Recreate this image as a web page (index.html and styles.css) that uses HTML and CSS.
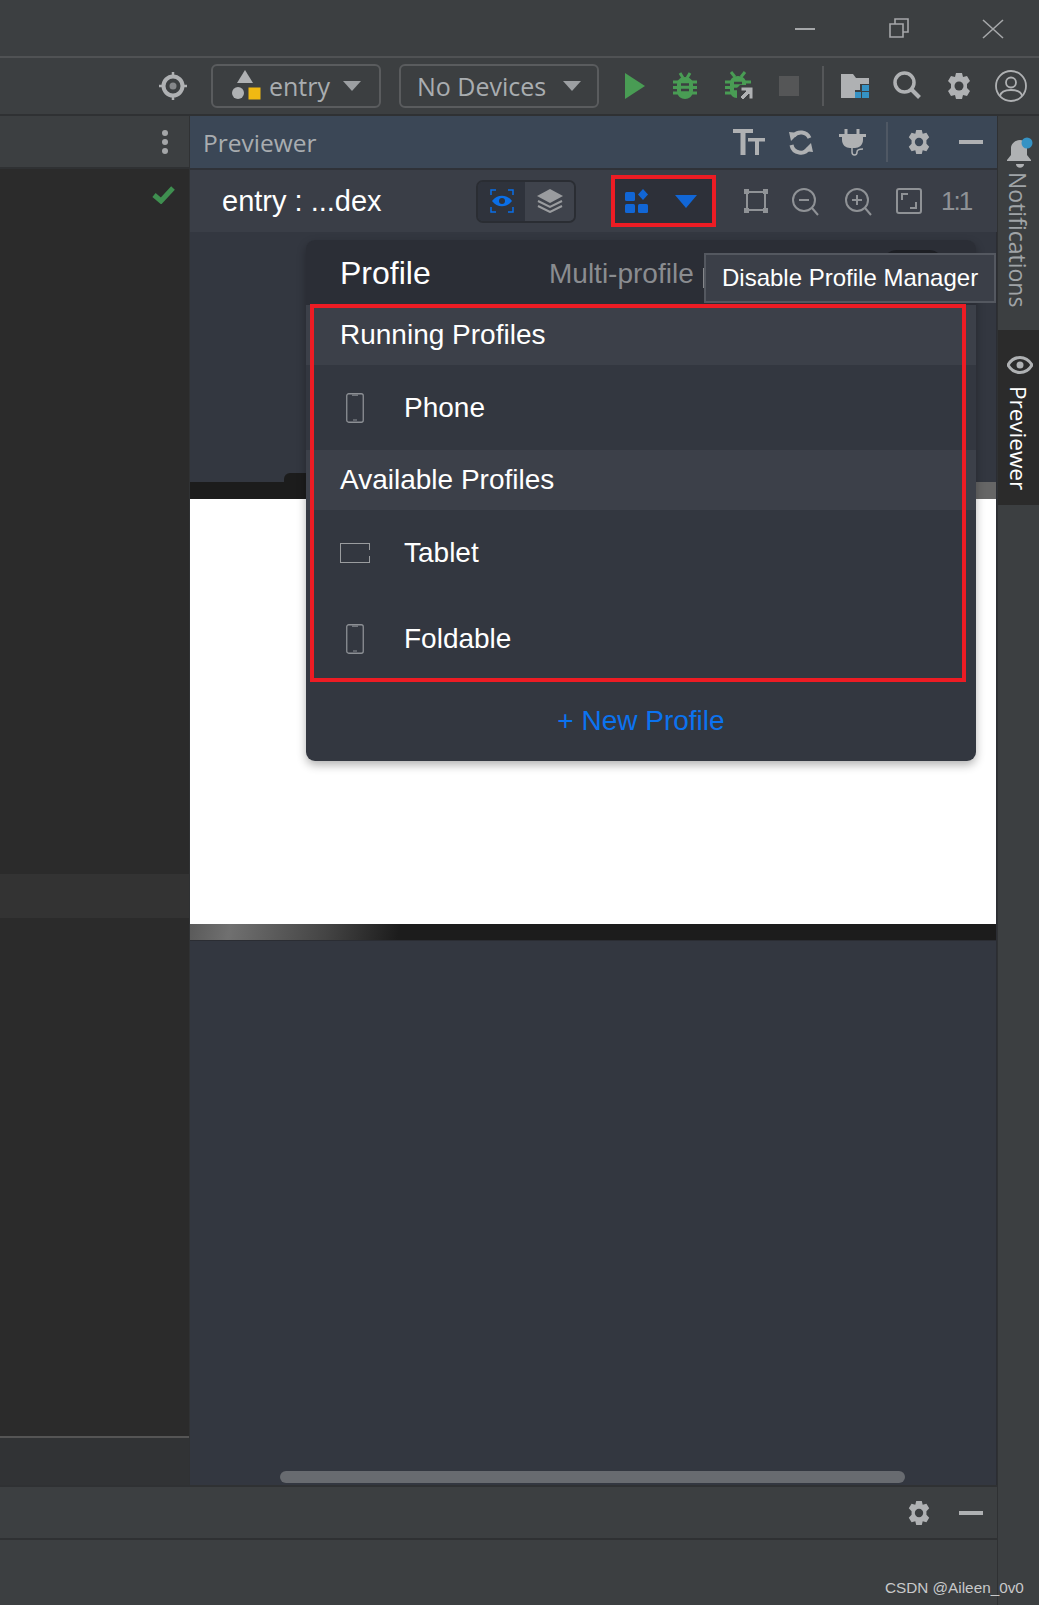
FILE: index.html
```html
<!DOCTYPE html>
<html lang="en">
<head>
<meta charset="utf-8">
<title>Previewer</title>
<link rel="stylesheet" href="styles.css">
</head>
<body>
<svg class="defs" width="0" height="0">
  <symbol id="gear" viewBox="0 0 28 28">
    <path fill="#afb1b3" d="M11 1h6l1 4 4-1 3 5-3 3v4l3 3-3 5-4-1-1 4h-6l-1-4-4 1-3-5 3-3v-4L3 9l3-5 4 1z"/>
    <circle cx="14" cy="14" r="4.5" fill="#3c3f41"/>
  </symbol>
  <symbol id="gear-h" viewBox="0 0 28 28">
    <path fill="#afb1b3" d="M11 1h6l1 4 4-1 3 5-3 3v4l3 3-3 5-4-1-1 4h-6l-1-4-4 1-3-5 3-3v-4L3 9l3-5 4 1z"/>
    <circle cx="14" cy="14" r="4.5" fill="#3b4756"/>
  </symbol>
  <symbol id="phone" viewBox="0 0 18 30">
    <rect x="0.75" y="0.75" width="16.5" height="28.5" rx="2" fill="none" stroke="#8d9095" stroke-width="1.3"/>
    <path d="M6 2.2h6M7 27h4" stroke="#8d9095" stroke-width="1"/>
  </symbol>
</svg>

<div class="app">
  <header class="titlebar">
    <svg class="win win-min" width="20" height="4" viewBox="0 0 20 4"><path d="M0 2h20" stroke="#a5a7a9" stroke-width="2"/></svg>
    <svg class="win win-max" width="20" height="20" viewBox="0 0 20 20"><path d="M1 6h13v13H1zM6 6V1h13v13h-5" fill="none" stroke="#a5a7a9" stroke-width="1.6"/></svg>
    <svg class="win win-close" width="22" height="20" viewBox="0 0 22 20"><path d="M1 1l20 18M21 1L1 19" stroke="#a5a7a9" stroke-width="1.6"/></svg>
  </header>

  <nav class="toolbar">
    <svg class="t-target" width="28" height="28" viewBox="0 0 28 28"><path d="M14 0v4M14 24v4M0 14h4M24 14h4" stroke="#afb1b3" stroke-width="2.5"/><circle cx="14" cy="14" r="9.500" fill="none" stroke="#afb1b3" stroke-width="4"/><circle cx="14" cy="14" r="3.500" fill="#85878a"/></svg>
    <div class="combo combo-entry">
      <svg class="entry-ico" width="30" height="32" viewBox="0 0 30 32"><path d="M14 1l8 13H6z" fill="#afb1b3"/><circle cx="7" cy="24" r="6" fill="#afb1b3"/><rect x="17.5" y="18.5" width="12" height="12" fill="#f0b912"/></svg>
      <span class="combo-label">entry</span>
      <i class="caret"></i>
    </div>
    <div class="combo combo-dev">
      <span class="combo-label">No Devices</span>
      <i class="caret"></i>
    </div>
    <svg class="t-play" width="20" height="26" viewBox="0 0 20 26"><path d="M0 0l20 13L0 26z" fill="#499c54"/></svg>
    <svg class="t-bug" width="24" height="28" viewBox="0 0 24 28"><g stroke="#499c54" stroke-width="3" fill="none"><path d="M7 1l3 5M17 1l-3 5M0 10h24M0 15.500h24M0 21h24"/></g><path d="M12 5c5 0 8 3 8 8v6c0 5-4 8-8 8s-8-3-8-8v-6c0-5 3-8 8-8z" fill="#499c54"/><path d="M8 12.500h8M8 18h8" stroke="#3c3f41" stroke-width="2.500"/></svg>
    <svg class="t-attach" width="30" height="30" viewBox="0 0 30 30"><g stroke="#499c54" stroke-width="3" fill="none"><path d="M6 1l4 5M20 1l-4 5M0 11h6M0 16.500h6M0 22h6M19 11h7"/></g><path d="M13 5c5 0 8 3 8 7v2h-6l-3 3v10c-4 0-7-3-7-8v-7c0-4 3-7 8-7z" fill="#499c54"/><path d="M9 12h8M9 18h4" stroke="#3c3f41" stroke-width="2.500"/><path d="M16 16h12v12h-4v-5l-6 6-3-3 6-6h-5z" fill="#afb1b3" stroke="#3c3f41"/></svg>
    <i class="t-stop"></i>
    <i class="t-div"></i>
    <svg class="t-folder" width="28" height="24" viewBox="0 0 28 24"><path d="M0 0h12l3 4h13v6h-9v6h-5v8H0z" fill="#afb1b3"/><path d="M21 11h7v6h-7zM14 18h6v6h-6zM21 18h7v6h-7z" fill="#3592c4"/></svg>
    <svg class="t-search" width="28" height="28" viewBox="0 0 28 28"><circle cx="11.500" cy="11.500" r="9.500" fill="none" stroke="#afb1b3" stroke-width="3.500"/><path d="M18.500 18.500l8 8" stroke="#afb1b3" stroke-width="4"/></svg>
    <svg class="t-gear" width="28" height="28"><use href="#gear"/></svg>
    <svg class="t-user" width="32" height="32" viewBox="0 0 32 32"><circle cx="16" cy="16" r="15" fill="none" stroke="#afb1b3" stroke-width="1.800"/><circle cx="16" cy="12.500" r="5" fill="none" stroke="#afb1b3" stroke-width="1.800"/><path d="M5 26c1-5 5-6 11-6s10 1 11 6" fill="none" stroke="#afb1b3" stroke-width="1.800"/></svg>
  </nav>

  <div class="body">
    <div class="workspace">
      <div class="main">
        <aside class="left">
          <div class="left-head"><i class="dot"></i><i class="dot"></i><i class="dot"></i></div>
          <div class="editor">
            <svg class="check" width="23" height="18" viewBox="0 0 23 18"><path d="M2 9l7 6L21 2" fill="none" stroke="#3f8f50" stroke-width="5"/></svg>
          </div>
          <div class="left-band"></div>
          <div class="editor-low"></div>
          <div class="left-foot"></div>
        </aside>

        <section class="preview">
          <div class="pv-head">
            <span class="pv-title">Previewer</span>
            <svg class="h-tt" width="32" height="26" viewBox="0 0 32 26"><path d="M0 0h20v4h-7.500v22h-5V4H0zM15 9h17v3.500h-6V26h-4V12.500h-7z" fill="#afb1b3"/></svg>
            <svg class="h-sync" width="26" height="26" viewBox="0 0 26 26"><path d="M21.500 9A9.500 9.500 0 0 0 5.500 7M3.500 16a9.500 9.500 0 0 0 17.500 3" fill="none" stroke="#afb1b3" stroke-width="4"/><path d="M1 3l10 1-8 8zM25 23l-10-1 8-8z" fill="#afb1b3"/></svg>
            <svg class="h-plug" width="28" height="27" viewBox="0 0 28 27"><path d="M7 0v5M19 0v5" stroke="#afb1b3" stroke-width="3"/><path d="M0 5h27v3h-3v3c0 5-4 8-8 8h-5c-4 0-8-3-8-8V8H0z" fill="#afb1b3"/><path d="M13 19v4c0 4 5 4 5 0 0-2 2-3 6-3" fill="none" stroke="#afb1b3" stroke-width="1.500"/></svg>
            <i class="h-div"></i>
            <svg class="h-gear" width="26" height="26"><use href="#gear-h"/></svg>
            <i class="h-min"></i>
          </div>

          <div class="pv-tools">
            <span class="pv-file">entry : ...dex</span>
            <div class="seg">
              <div class="seg-on">
                <svg width="24" height="24" viewBox="0 0 24 24"><path d="M1 6V1h5M18 1h5v5M1 18v5h5M18 23h5v-5" fill="none" stroke="#0a6fe8" stroke-width="1.500"/><path d="M2 12c5-7 15-7 20 0-5 7-15 7-20 0z" fill="#0a6fe8"/><circle cx="12" cy="12" r="3" fill="#2f333c"/></svg>
              </div>
              <div class="seg-off">
                <svg width="26" height="24" viewBox="0 0 26 24"><path d="M13 0l13 7-13 7L0 7z" fill="#9a9c9f"/><path d="M1 12l12 6 12-6M1 17l12 6 12-6" fill="none" stroke="#9a9c9f" stroke-width="2"/></svg>
              </div>
            </div>
            <div class="profile-btn">
              <svg width="23" height="24" viewBox="0 0 23 24"><g fill="#1166d6"><rect x="0" y="3" width="10" height="9" rx="1.500"/><rect x="0" y="15" width="10" height="9" rx="1.500"/><rect x="13" y="15" width="10" height="9" rx="1.500"/><path d="M18 0l5 5.500-5 5.500-5-5.500z"/></g></svg>
              <i class="blue-caret"></i>
            </div>
            <svg class="tool-crop" width="24" height="24" viewBox="0 0 24 24"><path d="M3 3h18v18H3z" fill="none" stroke="#8f9296" stroke-width="2"/><path d="M0 0h5v5H0zM19 0h5v5h-5zM0 19h5v5H0zM19 19h5v5h-5z" fill="#8f9296"/></svg>
            <svg class="tool-zo" width="28" height="28" viewBox="0 0 28 28"><circle cx="12" cy="12" r="11" fill="none" stroke="#8f9296" stroke-width="2"/><path d="M7 12h10M20 20l6 7" stroke="#8f9296" stroke-width="2"/></svg>
            <svg class="tool-zi" width="28" height="28" viewBox="0 0 28 28"><circle cx="12" cy="12" r="11" fill="none" stroke="#8f9296" stroke-width="2"/><path d="M7 12h10M12 7v10M20 20l6 7" stroke="#8f9296" stroke-width="2"/></svg>
            <svg class="tool-fit" width="26" height="26" viewBox="0 0 26 26"><rect x="1" y="1" width="24" height="24" rx="2" fill="none" stroke="#8f9296" stroke-width="2"/><path d="M6 12V6h6M20 14v6h-6" fill="none" stroke="#8f9296" stroke-width="2"/></svg>
            <span class="tool-ratio">1:1</span>
          </div>

          <div class="canvas">
            <div class="device-notch"></div>
            <div class="device-top"><i class="device-top-end"></i></div>
            <div class="device-screen"></div>
            <div class="device-bottom"></div>
            <div class="scroll-track"><i class="scroll-thumb"></i></div>

            <div class="popup">
              <div class="popup-head">
                <span class="popup-title">Profile</span>
                <span class="popup-multi">Multi-profile</span>
                <i class="multi-edge"></i>
                <i class="toggle"></i>
              </div>
              <div class="group-head">Running Profiles</div>
              <div class="row">
                <svg class="row-ico" width="18" height="30"><use href="#phone"/></svg>
                <span>Phone</span>
              </div>
              <div class="group-head">Available Profiles</div>
              <div class="row">
                <span class="tablet-ico"></span>
                <span>Tablet</span>
              </div>
              <div class="row row-last">
                <svg class="row-ico" width="18" height="30"><use href="#phone"/></svg>
                <span>Foldable</span>
              </div>
              <div class="new-profile">+ New Profile</div>
              <div class="red-frame"></div>
            </div>
            <div class="tooltip">Disable Profile Manager</div>
          </div>
        </section>
      </div>

      <div class="tool-panel">
        <svg class="h-gear" width="26" height="26"><use href="#gear"/></svg>
        <i class="h-min"></i>
      </div>
      <footer class="status"></footer>
    </div>

    <aside class="stripe">
      <div class="stripe-item">
        <svg class="bell" width="28" height="33" viewBox="0 0 28 33"><path d="M14 4c5 0 7 4 7 8v7l4 5v1H1v-1l4-5v-7c0-4 4-8 9-8z" fill="#afb1b3"/><path d="M10 28h8c0 5-8 5-8 0z" fill="#afb1b3"/><circle cx="21" cy="7" r="5.500" fill="#3592c4"/></svg>
        <span class="v-text v-notif">Notifications</span>
      </div>
      <div class="stripe-item stripe-on">
        <svg class="s-eye" width="26" height="18" viewBox="0 0 26 18"><path d="M1 9c6-10 18-10 24 0-6 10-18 10-24 0z" fill="none" stroke="#afb1b3" stroke-width="3"/><circle cx="13" cy="9" r="3.500" fill="#afb1b3"/></svg>
        <span class="v-text v-on">Previewer</span>
      </div>
    </aside>
  </div>
  <div class="watermark">CSDN @Aileen_0v0</div>
</div>
</body>
</html>
```

FILE: styles.css
```css
* { box-sizing: border-box; }
html, body { margin: 0; padding: 0; background: #3c3f41; }
.defs { position: absolute; }
i { display: block; }
svg { display: block; flex: none; }

.app {
  position: relative;
  width: 1039px;
  height: 1605px;
  overflow: hidden;
  display: flex;
  flex-direction: column;
  background: #3c3f41;
  font-family: "Liberation Sans", Arial, sans-serif;
}

/* title bar */
.titlebar {
  height: 58px;
  flex: none;
  border-bottom: 2px solid #505254;
  display: flex;
  align-items: flex-start;
}
.win-min { margin: 27px 0 0 795px; }
.win-max { margin: 18px 0 0 74px; }
.win-close { margin: 19px 0 0 73px; }

/* main toolbar */
.toolbar {
  height: 58px;
  flex: none;
  border-bottom: 2px solid #2f3133;
  display: flex;
  align-items: center;
  padding-left: 159px;
}
.combo {
  height: 44px;
  border: 2px solid #5a5c5e;
  border-radius: 6px;
  display: flex;
  align-items: center;
  font-family: "Open Sans", sans-serif;
  font-size: 25px;
  color: #a9adb0;
}
.combo-entry { width: 170px; margin-left: 24px; padding-left: 18px; }
.combo-dev { width: 200px; margin-left: 18px; padding-left: 16px; }
.entry-ico { margin-right: 8px; margin-top: -3px; }
.combo-entry .combo-label { width: 74px; }
.combo-dev .combo-label { width: 146px; }
.caret { width: 0; height: 0; border-left: 9px solid transparent; border-right: 9px solid transparent; border-top: 10px solid #9c9fa2; }
.t-play { margin-left: 26px; }
.t-bug { margin-left: 28px; }
.t-attach { margin-left: 28px; }
.t-stop { width: 20px; height: 20px; background: #555657; margin-left: 24px; }
.t-div { width: 2px; height: 40px; background: #555759; margin-left: 23px; }
.t-folder { margin-left: 17px; }
.t-search { margin-left: 24px; margin-top: -2px; }
.t-gear { margin-left: 24px; }
.t-user { margin-left: 22px; }

/* body */
.body { flex: 1; display: flex; min-height: 0; }
.workspace { width: 998px; display: flex; flex-direction: column; border-right: 1px solid #2f3133; }
.main { height: 1369px; display: flex; flex: none; }

.left { width: 190px; flex: none; display: flex; flex-direction: column; border-right: 1px solid #303234; }
.left-head { height: 53px; flex: none; display: flex; flex-direction: column; align-items: flex-end; justify-content: center; gap: 3px; padding-right: 21px; border-bottom: 2px solid #2f3133; }
.dot { width: 6px; height: 6px; border-radius: 50%; background: #a4a6a8; }
.editor { height: 705px; flex: none; background: #2b2b2b; padding: 17px 0 0 152px; }
.left-band { height: 44px; flex: none; background: #333333; }
.editor-low { height: 518px; flex: none; background: #2b2b2b; }
.left-foot { flex: 1; background: #313335; border-top: 2px solid #555555; }

.preview { flex: 1; display: flex; flex-direction: column; min-width: 0; }
.pv-head {
  height: 54px;
  flex: none;
  background: #3b4756;
  border-bottom: 2px solid #2f3238;
  display: flex;
  align-items: center;
  padding-left: 13px;
}
.pv-title { font-family: "Open Sans", sans-serif; font-size: 24.5px; color: #a9adb0; width: 530px; }
.h-sync { margin-left: 23px; }
.h-plug { margin-left: 25px; }
.h-div { width: 2px; height: 40px; background: #4f5864; margin-left: 19px; }
.h-gear { margin-left: 18px; }
.h-min { width: 24px; height: 4px; background: #afb1b3; margin-left: 27px; }

.pv-tools {
  height: 62px;
  flex: none;
  background: #3a3e47;
  display: flex;
  align-items: center;
  padding-left: 32px;
  font-size: 29px;
  color: #fff;
}
.pv-file { width: 254px; }
.seg {
  width: 100px;
  height: 43px;
  border: 2px solid #2a2d33;
  border-radius: 7px;
  overflow: hidden;
  display: flex;
}
.seg-on { width: 47px; background: #2f333c; display: flex; align-items: center; justify-content: center; }
.seg-off { flex: 1; background: #3f434c; display: flex; align-items: center; justify-content: center; }
.profile-btn {
  width: 105px;
  height: 52px;
  margin-left: 35px;
  border: 4px solid #ed1c24;
  background: #2d3039;
  display: flex;
  align-items: center;
  padding-left: 10px;
}
.blue-caret { width: 0; height: 0; margin-left: 27px; border-left: 11px solid transparent; border-right: 11px solid transparent; border-top: 13px solid #1166d6; }
.tool-crop { margin-left: 28px; }
.tool-zo { margin-left: 24px; margin-top: 2px; }
.tool-zi { margin-left: 25px; margin-top: 2px; }
.tool-fit { margin-left: 23px; }
.tool-ratio { margin-left: 19px; font-size: 26px; letter-spacing: -2px; color: #8f9296; }

.canvas { flex: 1; position: relative; background: #333740; display: flex; flex-direction: column; padding-top: 250px; border-right: 1px solid #2b2d33; }
.device-notch { position: absolute; left: 94px; top: 241px; width: 40px; height: 12px; background: #1c1c1c; border-radius: 6px 6px 0 0; }
.device-top { height: 17px; flex: none; background: #1c1c1c; position: relative; }
.device-top-end { position: absolute; right: 0; top: 0; width: 30px; height: 17px; background: #666666; }
.device-screen { height: 425px; flex: none; background: #fff; }
.device-bottom { height: 17px; flex: none; background: linear-gradient(100deg, #5a5a5a 0%, #707070 5%, #444 17%, #1c1c1c 26%); border-bottom: 1px solid #2b2d33; }
.scroll-track { flex: 1; display: flex; align-items: flex-end; padding: 0 0 2px 90px; }
.scroll-thumb { width: 625px; height: 12px; background: #686b70; border-radius: 6px; }

.popup {
  position: absolute;
  left: 116px;
  top: 8px;
  width: 670px;
  height: 521px;
  border-radius: 9px;
  background: #333740;
  box-shadow: 0 4px 10px rgba(0, 0, 0, .3);
  color: #fff;
  font-size: 28px;
  display: flex;
  flex-direction: column;
}
.popup-head { height: 65px; flex: none; background: #2b2e36; border-radius: 9px 9px 0 0; display: flex; align-items: center; padding: 2px 0 0 34px; }
.popup-title { font-size: 32px; width: 209px; }
.popup-multi { color: #8a8c90; }
.multi-edge { position: absolute; left: 397px; top: 28px; width: 2px; height: 20px; background: #85878b; }
.toggle { position: absolute; left: 576px; top: 10px; width: 62px; height: 30px; border-radius: 15px; background: #1d1f24; }
.group-head { height: 60px; flex: none; background: #3c4049; display: flex; align-items: center; padding-left: 34px; }
.row { height: 85px; flex: none; display: flex; align-items: center; padding-left: 34px; }
.row-last { padding-top: 2px; }
.row-ico { margin: 0 40px 0 6px; }
.tablet-ico { position: relative; width: 30px; height: 20px; border: 1px solid #9a9c9f; margin-right: 34px; }
.tablet-ico::after { content: ""; position: absolute; right: -2px; top: 6px; width: 2px; height: 6px; background: #333740; }
.new-profile { flex: 1; display: flex; align-items: center; justify-content: center; color: #0b73f0; }
.red-frame { position: absolute; left: 4px; top: 64px; width: 656px; height: 378px; border: 4px solid #ed1c24; }
.tooltip {
  position: absolute;
  left: 514px;
  top: 21px;
  width: 292px;
  height: 50px;
  background: #3b3f48;
  border: 2px solid #545860;
  color: #fff;
  font-size: 24px;
  display: flex;
  align-items: center;
  padding-left: 16px;
  white-space: nowrap;
}

.tool-panel { height: 53px; flex: none; border-top: 2px solid #2f3133; display: flex; align-items: center; justify-content: flex-end; padding-right: 14px; }
.status { flex: 1; border-top: 2px solid #2f3133; }

/* right stripe */
.stripe { flex: 1; display: flex; flex-direction: column; }
.stripe-item { display: flex; flex-direction: column; align-items: center; padding-left: 3px; }
.stripe-item:first-child { height: 214px; padding-top: 20px; }
.stripe-on { height: 175px; background: #2b2b2b; padding-top: 26px; }
.s-eye { margin-bottom: 12px; }
.v-text { writing-mode: vertical-rl; font-family: "Open Sans", sans-serif; font-size: 22.5px; line-height: 26px; color: #a0a4a7; margin-left: -4px; }
.v-notif { font-size: 23px; margin-top: 3px; }
.v-on { color: #fff; }

.watermark { position: absolute; left: 885px; top: 1579px; font-size: 15.3px; color: #c8c9ca; white-space: nowrap; }
```
